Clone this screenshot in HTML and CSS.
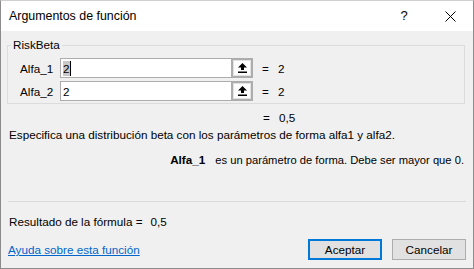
FILE: index.html
```html
<!DOCTYPE html>
<html lang="es">
<head>
    <meta charset="UTF-8">
    <title>Argumentos de función</title>
    <link rel="stylesheet" href="styles.css">
</head>
<body>
    <div class="dialog">
        <div class="titlebar">
            <span class="title">Argumentos de función</span>
            <span class="caption-btn help">?</span>
            <span class="caption-btn">
                <svg width="11" height="11" viewBox="0 0 11 11">
                    <path d="M0.5 0.5 L10.5 10.5 M10.5 0.5 L0.5 10.5" stroke="#000" stroke-width="1"/>
                </svg>
            </span>
        </div>

        <div class="content">
            <fieldset class="group">
                <legend>RiskBeta</legend>
                <div class="arg-row">
                    <label class="arg-label">Alfa_1</label>
                    <div class="arg-input"><span class="selected">2</span><span class="caret"></span></div>
                    <div class="ref-btn">
                        <svg width="9" height="10" viewBox="0 0 9 10">
                            <path d="M4.5 0 L9 4.5 L6 4.5 L6 7 L3 7 L3 4.5 L0 4.5 Z" fill="#000"/>
                            <rect x="0" y="8.5" width="9" height="1.5" fill="#000"/>
                        </svg>
                    </div>
                    <span class="eq">=</span>
                    <span class="val">2</span>
                </div>
                <div class="arg-row">
                    <label class="arg-label">Alfa_2</label>
                    <div class="arg-input">2</div>
                    <div class="ref-btn">
                        <svg width="9" height="10" viewBox="0 0 9 10">
                            <path d="M4.5 0 L9 4.5 L6 4.5 L6 7 L3 7 L3 4.5 L0 4.5 Z" fill="#000"/>
                            <rect x="0" y="8.5" width="9" height="1.5" fill="#000"/>
                        </svg>
                    </div>
                    <span class="eq">=</span>
                    <span class="val">2</span>
                </div>
            </fieldset>

            <div class="total"><span class="eq">=</span><span class="val">0,5</span></div>
            <div class="desc">Especifica una distribución beta con los parámetros de forma alfa1 y alfa2.</div>
            <div class="arg-help"><b>Alfa_1</b><span>es un parámetro de forma. Debe ser mayor que 0.</span></div>

            <div class="separator"></div>

            <div class="result">Resultado de la fórmula =<span class="result-val">0,5</span></div>

            <div class="footer">
                <a href="#" class="help-link">Ayuda sobre esta función</a>
                <button type="button" class="btn default">Aceptar</button>
                <button type="button" class="btn">Cancelar</button>
            </div>
        </div>
    </div>
</body>
</html>
```

FILE: styles.css
```css
* {
    box-sizing: border-box;
}

body {
    margin: 0;
    font-family: "Liberation Sans", Arial, sans-serif;
    font-size: 11.7px;
    color: #000;
}

.dialog {
    width: 474px;
    height: 269px;
    border: 1px solid #8c8c8c;
    border-top-color: #d0d0d0;
    background-color: #f0f0f0;
    display: flex;
    flex-direction: column;
    overflow: hidden;
}

.titlebar {
    height: 30px;
    flex-shrink: 0;
    background-color: #fff;
    display: flex;
    align-items: center;
    padding-left: 8px;
}

.title {
    font-size: 12.4px;
    flex: 1;
}

.caption-btn {
    width: 46px;
    height: 30px;
    flex-shrink: 0;
    display: flex;
    align-items: center;
    justify-content: center;
}

.help {
    font-size: 13px;
    padding-bottom: 1px;
}

.content {
    padding: 0 7px;
    flex: 1;
    display: flex;
    flex-direction: column;
}

.group {
    margin: 7px 1px 0 -1px;
    border: 1px solid #dcdcdc;
    padding: 6px 0 2px 12px;
    min-width: 0;
    flex-shrink: 0;
}

.group legend {
    padding: 0 2px;
    margin-left: -9px;
    line-height: 14px;
}

.arg-row {
    display: flex;
    align-items: center;
    height: 20px;
    margin-bottom: 3px;
}

.arg-row:last-child {
    margin-bottom: 0;
}

.arg-label {
    width: 40px;
}

.arg-input {
    width: 171px;
    height: 20px;
    background-color: #fff;
    border: 1px solid #adadad;
    border-right: none;
    padding: 2px 0 0 2px;
    display: flex;
    align-items: flex-start;
    line-height: 15px;
}

.selected {
    background-color: #c9c9c9;
}

.caret {
    width: 1px;
    height: 15px;
    background-color: #000;
}

.ref-btn {
    width: 22px;
    height: 20px;
    border: 2px solid #adadad;
    background-color: #fdfdfd;
    box-shadow: inset 0 0 0 1px #e3e3e3;
    display: flex;
    align-items: center;
    justify-content: center;
}

.eq {
    margin-left: 9px;
    width: 16px;
}

.val {
    width: 30px;
}

.total {
    margin-top: 6px;
    padding-left: 255px;
    line-height: 16px;
    display: flex;
}

.total .eq {
    margin-left: 0;
}

.desc {
    margin-top: 1px;
    line-height: 16px;
    padding-left: 1px;
    white-space: nowrap;
}

.arg-help {
    margin-top: 9px;
    line-height: 16px;
    padding-right: 2px;
    display: flex;
    justify-content: flex-end;
    white-space: nowrap;
}

.arg-help span {
    margin-left: 10px;
    font-size: 11.2px;
}

.separator {
    margin-top: 33px;
    border-top: 1px solid #dadada;
}

.result {
    margin-top: 12px;
    line-height: 16px;
    padding-left: 1px;
}

.result-val {
    margin-left: 8px;
}

.footer {
    margin-top: 9px;
    display: flex;
    align-items: center;
}

.help-link {
    flex: 1;
    color: #0066cc;
    text-decoration: underline;
}

.btn {
    width: 74px;
    height: 21px;
    font-family: inherit;
    font-size: 11.7px;
    color: #000;
    background-color: #e1e1e1;
    border: 1px solid #adadad;
    padding: 0;
    margin-left: 10px;
}

.btn.default {
    border: 2px solid #0078d7;
    margin-left: 0;
}
```
